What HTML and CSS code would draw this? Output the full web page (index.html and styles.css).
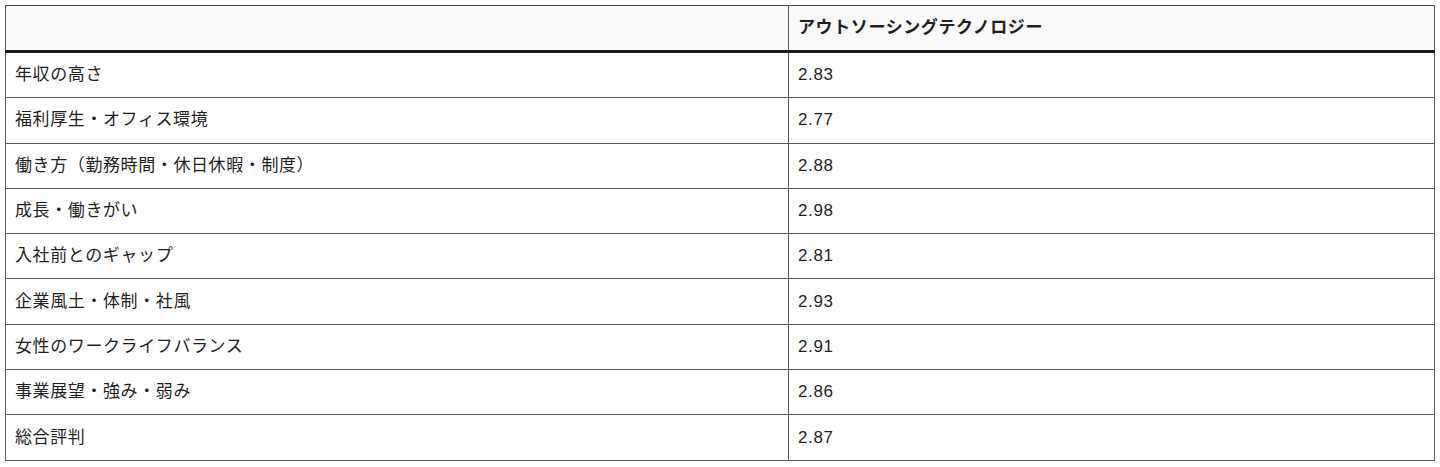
FILE: index.html
```html
<!DOCTYPE html>
<html lang="ja">
<head>
<meta charset="utf-8">
<link rel="stylesheet" href="styles.css">
</head>
<body>
<div class="wrap">
<table class="score-table">
<colgroup><col class="col-label"><col class="col-value"></colgroup>
<thead>
<tr><th></th><th>アウトソーシングテクノロジー</th></tr>
</thead>
<tbody>
<tr><td>年収の高さ</td><td>2.83</td></tr>
<tr><td>福利厚生・オフィス環境</td><td>2.77</td></tr>
<tr><td>働き方（勤務時間・休日休暇・制度）</td><td>2.88</td></tr>
<tr><td>成長・働きがい</td><td>2.98</td></tr>
<tr><td>入社前とのギャップ</td><td>2.81</td></tr>
<tr><td>企業風土・体制・社風</td><td>2.93</td></tr>
<tr><td>女性のワークライフバランス</td><td>2.91</td></tr>
<tr><td>事業展望・強み・弱み</td><td>2.86</td></tr>
<tr><td>総合評判</td><td>2.87</td></tr>
</tbody>
</table>
</div>
</body>
</html>
```
FILE: styles.css
```css
html, body {
  margin: 0;
  padding: 0;
  background: #ffffff;
}
body {
  font-family: "Liberation Sans", "Noto Sans CJK JP", sans-serif;
  color: #1f1f1f;
}
.wrap {
  padding: 5px 5px 0 5px;
}
.score-table {
  width: 100%;
  border-collapse: collapse;
  table-layout: fixed;
  font-size: 17px;
  letter-spacing: 0.6px;
}
.col-label {
  width: 783px;
}
.score-table th,
.score-table td {
  border: 1px solid #5a5a5a;
  padding: 0 9px;
  text-align: left;
  vertical-align: middle;
  line-height: 24px;
}
.score-table thead th {
  height: 44px;
  background: #f9f9f9;
  font-weight: 700;
  border-top: 1px solid #444;
  border-bottom: 3px solid #1c1d1f;
}
.score-table tbody td {
  height: 44.3px;
}
```
